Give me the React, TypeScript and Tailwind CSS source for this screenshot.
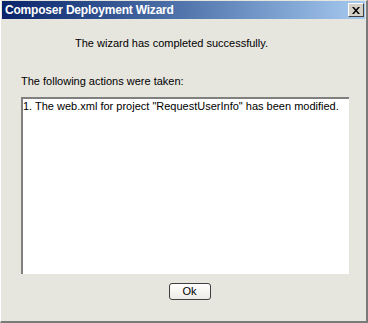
export default function App() {
	return (
		<div className="h-[323px] w-[368px] overflow-hidden bg-[#e6e5de] font-['Liberation_Sans',Arial,sans-serif] text-black">
			<div className="flex h-full flex-col border-t border-l border-t-[#e6e5de] border-l-[#ffffff] border-r-2 border-b-2 border-r-[#7a7a7a] border-b-[#7a7a7a]">
				{/* title bar */}
				<div className="mx-[1px] flex h-[18px] items-center justify-between bg-gradient-to-r from-[#0a246a] to-[#a6caf0] pr-[1px] pl-[3px]">
					<span className="text-[12px] leading-none font-bold tracking-[-0.2px] text-white">
						Composer Deployment Wizard
					</span>
					<button className="flex h-[14px] w-[16px] items-center justify-center border border-t-white border-l-white border-r-[#404040] border-b-[#404040] bg-[#d4d0c8]">
						<svg width="8" height="7" viewBox="0 0 8 7" aria-hidden>
							<path
								d="M0 0h2l2 2.5L6 0h2L5 3.5 8 7H6L4 4.5 2 7H0l3-3.5z"
								fill="#000"
							/>
						</svg>
					</button>
				</div>

				<div className="flex flex-1 flex-col px-[20px]">
					<p className="mt-[17px] pr-[24px] text-center text-[11px] leading-[14px]">
						The wizard has completed successfully.
					</p>
					<p className="mt-[24px] text-[11px] leading-[14px]">
						The following actions were taken:
					</p>
					<div className="mt-[9px] h-[177px] w-[328px] border-t-2 border-l-2 border-t-[#808080] border-l-[#808080] bg-white">
						<p className="text-[11px] leading-[14px]">
							1. The web.xml for project "RequestUserInfo" has been modified.
						</p>
					</div>
					<div className="mt-[9px] flex justify-center pl-[12px]">
						<button className="h-[17px] w-[42px] rounded-[3px] border border-[#404040] bg-gradient-to-b from-[#ffffff] to-[#ecebe6] text-[11px] leading-none">
							Ok
						</button>
					</div>
				</div>
			</div>
		</div>
	);
}
